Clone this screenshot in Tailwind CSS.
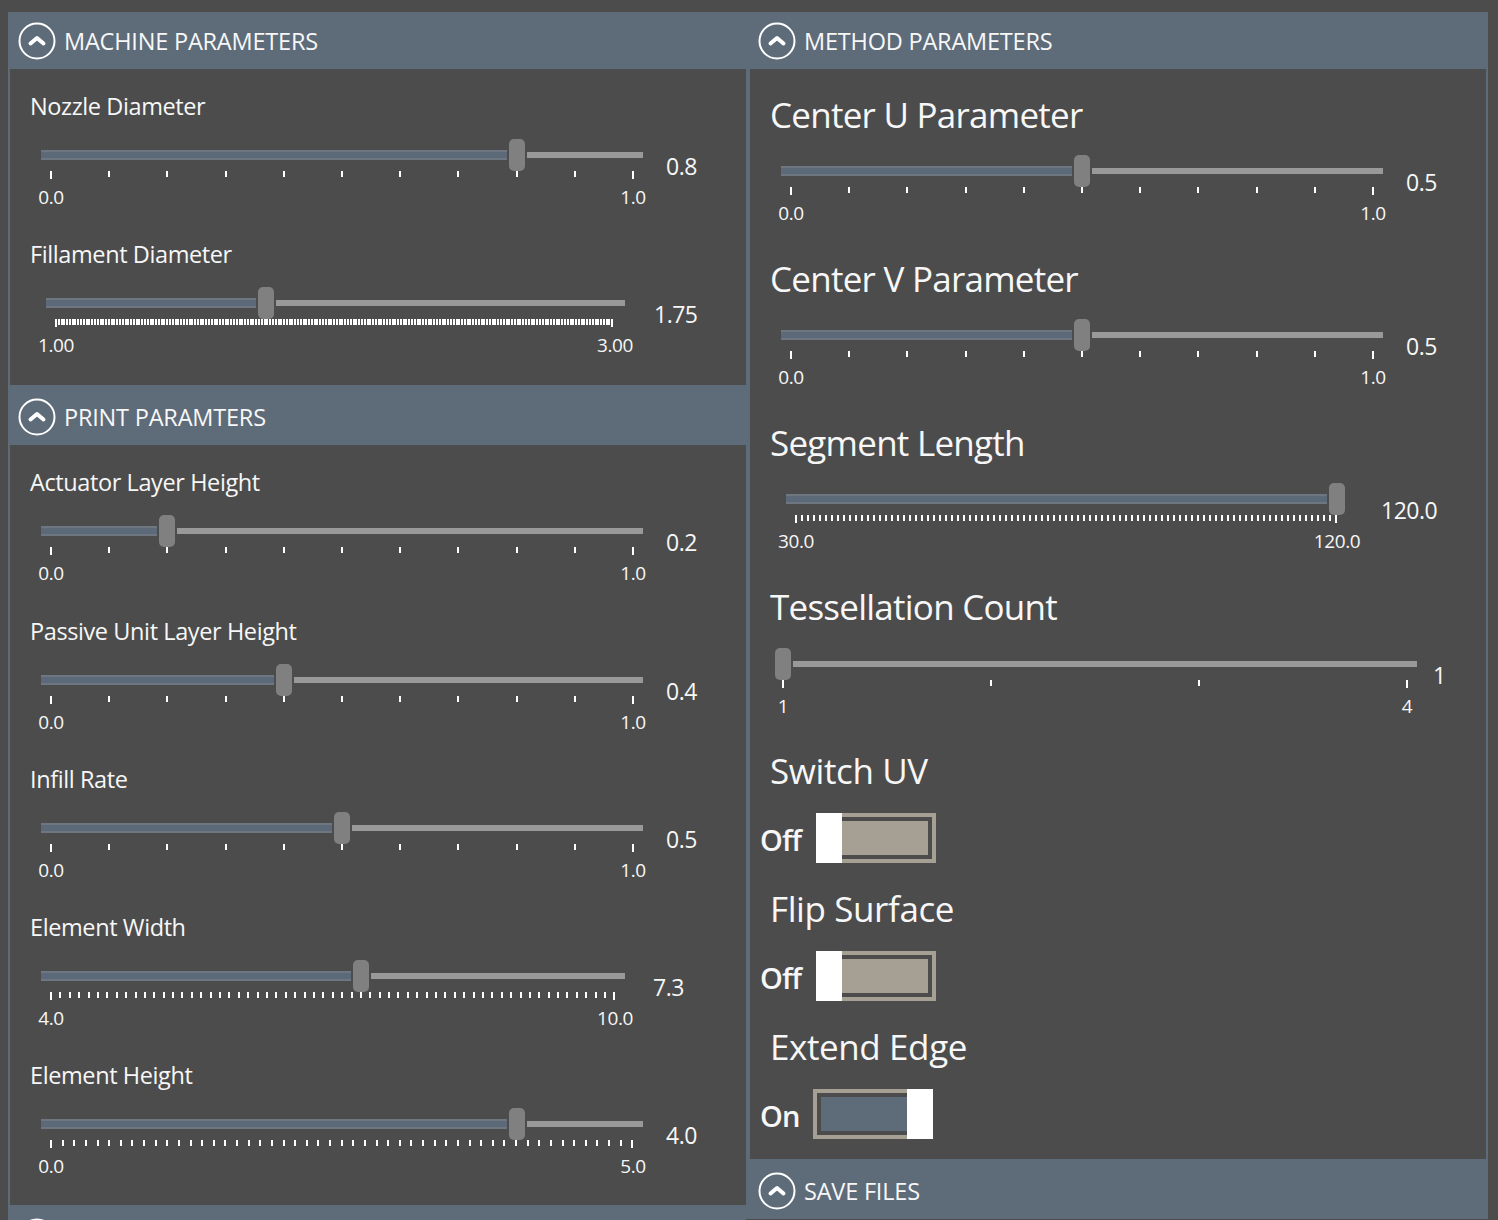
<!DOCTYPE html>
<html lang="en">
<head>
    <meta charset="UTF-8">
    <title>Parameters</title>
    <script src="https://cdn.jsdelivr.net/npm/@tailwindcss/browser@4"></script>
</head>
<body class="bg-[#4c4c4c] font-['Open_Sans','Noto_Sans',sans-serif] text-[#f7f7f7] overflow-hidden">
    <div class="flex h-[1220px] w-[1498px] pl-[8px] pt-[12px]">
        <!-- Left column -->
        <div class="w-[738px] shrink-0 border-l-2 border-[#5e6b79]">
            <div id="machine-header" class="h-[57px] bg-[#5e6b79] flex items-center"></div>
            <div id="machine-list" class="h-[316px] pt-[12px]"></div>
            <div id="print-header" class="h-[60px] pt-[4px] bg-[#5e6b79] flex items-center"></div>
            <div id="print-list" class="h-[760px] pt-[12.4px]"></div>
            <div id="other-header" class="h-[60px] pt-[4px] bg-[#5e6b79] flex items-center"></div>
        </div>
        <!-- Right column -->
        <div class="w-[742px] h-[1207px] shrink-0 border-l-4 border-r-2 border-[#5e6b79]">
            <div id="method-header" class="h-[57px] bg-[#5e6b79] flex items-center"></div>
            <div id="method-list" class="h-[1090px] pt-[12px]"></div>
            <div id="save-header" class="h-[60px] pt-[4px] bg-[#5e6b79] flex items-center"></div>
        </div>
    </div>
    <script>
    function header(title) {
        if (!title) title = '';
        return `<svg width="38" height="38" viewBox="0 0 38 38" class="ml-[8px] shrink-0"><circle cx="19" cy="19" r="17.5" fill="none" stroke="#fff" stroke-width="2"/><path d="M12.5 21.5 L19 16 L25.5 21.5" fill="none" stroke="#fff" stroke-width="4" stroke-linecap="round" stroke-linejoin="round"/></svg><span class="ml-[8px] pt-[2px] text-[23.5px] tracking-[-0.2px]">${title}</span>`;
    }
    // x = track left inside the column, w = track width, ticks = number of intervals, gap = space before value
    function slider(s) {
        const ticks = [];
        for (let i = 0; i <= s.ticks; i++) {
            const end = i == 0 || i == s.ticks;
            ticks.push(`<div class="w-[2px] bg-white ${end ? 'h-[8px]' : 'h-[6px]'}"></div>`);
        }
        const span = s.w - 20;
        const thumb = 10 + s.pct * span;
        const leftW = Math.max(thumb - 10, 0);
        const rightW = Math.max(s.w - thumb - 10, 0);
        return `<div class="flex">
            <div class="shrink-0" style="margin-left:${s.x}px;width:${s.w}px">
                <div class="flex items-center h-[32px]">
                    <div class="h-[10px] bg-[#5b6978] border-y-2 border-[#6d7681]" style="width:${leftW}px"></div>
                    <div class="w-[16px] h-[32px] mx-[2px] shrink-0 rounded-[5px] bg-[#808080]"></div>
                    <div class="h-[6px] bg-[#999999]" style="width:${rightW}px"></div>
                </div>
                <div class="flex justify-between px-[9px] h-[8px]">${ticks.join('')}</div>
                <div class="flex justify-between px-[10px] mt-[8px] h-[20px] text-[19px] leading-[20px] tracking-[-0.4px]">
                    <div class="w-0 flex justify-center whitespace-nowrap">${s.min}</div>
                    <div class="w-0 flex justify-center whitespace-nowrap">${s.max}</div>
                </div>
            </div>
            <div class="mt-[15px] h-[24px] leading-[24px] text-[23px] tracking-[-0.5px] whitespace-nowrap" style="margin-left:${s.gap}px">${s.val}</div>
        </div>`;
    }
    function leftRow(s) {
        return `<div class="h-[148.25px] pt-[10px]">
            <div class="ml-[20px] h-[32px] leading-[31px] text-[23.5px] tracking-[-0.4px] mb-[16px]">${s.label}</div>
            ${slider(s)}
        </div>`;
    }
    function rightRow(s) {
        return `<div class="h-[163.9px] pt-[15px]">
            <div class="ml-[20px] mb-[19px] h-[40px] leading-[38px] text-[35px] tracking-[-0.75px] ${s.ticks == 3 ? 'pb-[1px]' : ''}">${s.label}</div>
            <div class="${s.ticks == 3 ? 'pt-[1px]' : ''}">${slider(s)}</div>
        </div>`;
    }
    function toggle(label, state, on) {
        const box = on
            ? `<div class="ml-[10px] w-[120px] h-[50px] flex border-4 border-[#a59f94] border-r-0">
                 <div class="flex-1 m-[4px] mr-0 bg-[#5e6b79]"></div><div class="w-[26px] h-[50px] -my-[4px] bg-white shrink-0"></div></div>`
            : `<div class="ml-[13px] w-[120px] h-[50px] flex border-4 border-[#a59f94] border-l-0">
                 <div class="w-[26px] h-[50px] -my-[4px] bg-white shrink-0"></div><div class="flex-1 m-[4px] ml-0 bg-[#a59f94]"></div></div>`;
        return `<div class="ml-[20px] h-[40px] leading-[38px] text-[35px] tracking-[-0.4px]">${label}</div>
            <div class="flex items-center ml-[10px] mt-[21px] h-[50px]">
                <div class="w-[43px] text-[29px] font-semibold tracking-[-0.9px] pt-[4px]">${state}</div>${box}
            </div>`;
    }

    const machine = [
        { label: 'Nozzle Diameter', x: 31, w: 602, gap: 23, min: '0.0', max: '1.0', val: '0.8', pct: 0.8, ticks: 10 },
        { label: 'Fillament Diameter', x: 36, w: 579, gap: 29, min: '1.00', max: '3.00', val: '1.75', pct: 0.375, ticks: 200 }
    ];
    const print = [
        { label: 'Actuator Layer Height', x: 31, w: 602, gap: 23, min: '0.0', max: '1.0', val: '0.2', pct: 0.2, ticks: 10 },
        { label: 'Passive Unit Layer Height', x: 31, w: 602, gap: 23, min: '0.0', max: '1.0', val: '0.4', pct: 0.4, ticks: 10 },
        { label: 'Infill Rate', x: 31, w: 602, gap: 23, min: '0.0', max: '1.0', val: '0.5', pct: 0.5, ticks: 10 },
        { label: 'Element Width', x: 31, w: 584, gap: 28, min: '4.0', max: '10.0', val: '7.3', pct: 0.55, ticks: 60 },
        { label: 'Element Height', x: 31, w: 602, gap: 23, min: '0.0', max: '5.0', val: '4.0', pct: 0.8, ticks: 50 }
    ];
    const method = [
        { label: 'Center U Parameter', x: 31, w: 602, gap: 23, min: '0.0', max: '1.0', val: '0.5', pct: 0.5, ticks: 10 },
        { label: 'Center V Parameter', x: 31, w: 602, gap: 23, min: '0.0', max: '1.0', val: '0.5', pct: 0.5, ticks: 10 },
        { label: 'Segment Length', x: 36, w: 561, gap: 34, min: '30.0', max: '120.0', val: '120.0', pct: 1, ticks: 90 },
        { label: 'Tessellation Count', x: 23, w: 644, gap: 16, min: '1', max: '4', val: '1', pct: 0, ticks: 3 }
    ];

    document.getElementById('machine-header').innerHTML = header('MACHINE PARAMETERS');
    document.getElementById('print-header').innerHTML = header('PRINT PARAMTERS');
    document.getElementById('other-header').innerHTML = header('');
    document.getElementById('method-header').innerHTML = header('METHOD PARAMETERS');
    document.getElementById('save-header').innerHTML = header('SAVE FILES');
    document.getElementById('machine-list').innerHTML = machine.map(leftRow).join('');
    document.getElementById('print-list').innerHTML = print.map(leftRow).join('');
    document.getElementById('method-list').innerHTML = method.map(rightRow).join('') +
        '<div class="pt-[15px]">' + toggle('Switch UV', 'Off', false) + '</div>' +
        '<div class="pt-[27px]">' + toggle('Flip Surface', 'Off', false) + '</div>' +
        '<div class="pt-[27px]">' + toggle('Extend Edge', 'On', true) + '</div>';
    </script>
</body>
</html>
